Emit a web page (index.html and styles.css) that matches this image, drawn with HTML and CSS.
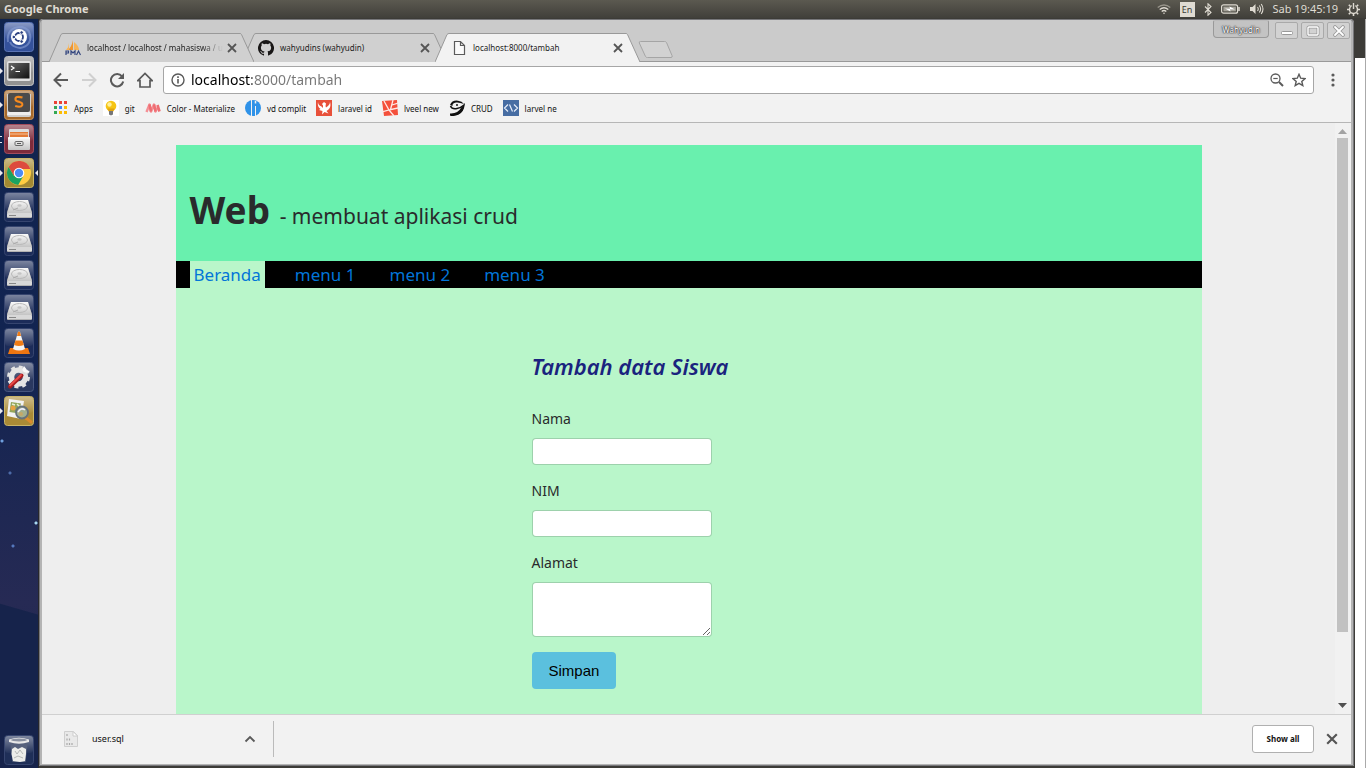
FILE: index.html
```html
<!DOCTYPE html>
<html lang="id">
<head>
<meta charset="utf-8">
<title>localhost:8000/tambah</title>
<link rel="stylesheet" href="styles.css">
</head>
<body>
<svg class="defs" aria-hidden="true">
  <defs>
    <linearGradient id="gloss" x1="0" y1="0" x2="0" y2="1"><stop offset="0" stop-color="#fff" stop-opacity=".42"/><stop offset="1" stop-color="#fff" stop-opacity=".03"/></linearGradient>
    <linearGradient id="silver" x1="0" y1="0" x2="0" y2="1"><stop offset="0" stop-color="#fafafa"/><stop offset="1" stop-color="#c4c4c4"/></linearGradient>
    <linearGradient id="dark" x1="0" y1="0" x2="1" y2="1"><stop offset="0" stop-color="#676767"/><stop offset="1" stop-color="#111"/></linearGradient>
    <symbol id="close" viewBox="0 0 10 10"><path d="M1 1l8 8M9 1l-8 8" stroke="#555" stroke-width="1.8" fill="none"/></symbol>
    <symbol id="disk" viewBox="0 0 30 30">
      <rect x=".5" y=".5" width="29" height="29" rx="3" fill="#1c2c59" stroke="#36456f"/><rect x="1" y="1" width="28" height="17" rx="3" fill="url(#gloss)"/>
      <path d="M7 8h17l4 12v5q0 1-1 1H4q-1 0-1-1v-5z" fill="#8d8d8d"/><path d="M7 8h17l4 13H3z" fill="url(#silver)"/>
      <ellipse cx="15.500" cy="14" rx="8" ry="4.500" fill="none" stroke="#b9b9b9"/><ellipse cx="15.500" cy="13.500" rx="2.200" ry="1.300" fill="#c4c4c4"/><path d="M9 18l5-2" stroke="#aaa"/>
      <rect x="3" y="21" width="25" height="4.500" rx="1" fill="#d8d8d8"/><path d="M5 23.500h7" stroke="#888"/>
    </symbol>
  </defs>
</svg>

<header class="panel">
  <strong class="panel-title">Google Chrome</strong>
  <div class="indicators">
    <svg width="14" height="12" viewBox="0 0 14 12" fill="none" stroke="#dfdbd2" stroke-width="1.300"><path d="M.7 4.500q6.300-5 12.600 0" stroke="#99968c"/><path d="M2.700 6.500q4.300-3.500 8.600 0M4.700 8.500q2.300-2 4.600 0"/><path d="M5.800 9.700h2.400L7 11.200z" fill="#dfdbd2" stroke="none"/></svg>
    <span class="lang">En</span>
    <svg width="8" height="13" viewBox="0 0 8 13" fill="none" stroke="#dfdbd2" stroke-width="1.100"><path d="M1 3.500l6 6-3 2.700V.8l3 2.700-6 6"/></svg>
    <svg width="19" height="10" viewBox="0 0 19 10"><rect x=".6" y=".8" width="16" height="8.400" rx="2" fill="none" stroke="#dfdbd2" stroke-width="1.200"/><path d="M18 3v4" stroke="#dfdbd2" stroke-width="1.500"/><rect x="2.400" y="2.600" width="12.500" height="4.800" fill="#a5a299"/><path d="M4 4.500l5 .2L8.500 2.500 14 5.500l-5-.2.500 2.200z" fill="#fff"/></svg>
    <svg width="15" height="12" viewBox="0 0 15 12"><path d="M1 4h2.500L6.500 1v10L3.500 8H1z" fill="#dfdbd2"/><path d="M8.500 4q1.500 2 0 4M10.300 2.500q2.600 3.500 0 7M12.200 1q3.600 5 0 10" fill="none" stroke="#dfdbd2" stroke-width="1.100"/></svg>
    <time class="clock">Sab 19:45:19</time>
    <svg width="13" height="13" viewBox="0 0 13 13" fill="none" stroke="#dfdbd2"><circle cx="6.500" cy="6.500" r="4" stroke-width="1.500"/><path d="M1.800 1.800l1.500 1.500M11.200 1.800L9.700 3.300M1.800 11.200l1.500-1.500M11.200 11.200L9.700 9.700M0 6.500h2M11 6.500h2M6.500 11v2" stroke-width="1.600"/><path d="M6.500 0v6" stroke="#47463f" stroke-width="3.600"/><path d="M6.500 0v6" stroke-width="1.500"/></svg>
  </div>
</header>

<div class="desktop">
  <nav class="launcher" aria-label="Launcher">
    <button class="app" aria-label="Dash"><svg viewBox="0 0 30 30"><rect x=".5" y=".5" width="29" height="29" rx="3" fill="#34519b" stroke="#5a74b5"/><rect x="1" y="1" width="28" height="16" rx="3" fill="url(#gloss)"/><path d="M4 20Q2 5 18 5q8 2 8 9M26 12q2 12-10 14Q8 25 6 20" fill="none" stroke="#8ba0d6" stroke-width="2" opacity=".6"/><circle cx="15" cy="15" r="8" fill="#fff"/><circle cx="15" cy="15" r="4" fill="none" stroke="#2b4080" stroke-width="1.800"/><g stroke="#fff" stroke-width="1"><circle cx="9.800" cy="15" r="1.800" fill="#2b4080"/><circle cx="17.600" cy="10.500" r="1.800" fill="#2b4080"/><circle cx="17.600" cy="19.500" r="1.800" fill="#2b4080"/></g></svg></button>
    <button class="app open" aria-label="Terminal"><svg viewBox="0 0 30 30"><rect x=".5" y=".5" width="29" height="29" rx="3" fill="#929292" stroke="#c4c4c4"/><rect x="1" y="1" width="28" height="16" rx="3" fill="url(#gloss)"/><rect x="3" y="5" width="24" height="20" rx="2" fill="#e2e2e2"/><rect x="4.500" y="7" width="21" height="15.500" fill="url(#dark)"/><path d="M7 10l3 2-3 2M11.500 15.500H16" fill="none" stroke="#fff" stroke-width="1.200"/></svg></button>
    <button class="app open" aria-label="Sublime Text"><svg viewBox="0 0 30 30"><rect x=".5" y=".5" width="29" height="29" rx="3" fill="#a5692b" stroke="#c6935b"/><rect x="1" y="1" width="28" height="16" rx="3" fill="url(#gloss)"/><path d="M3 4h24v21q0 2-2 2H5q-2 0-2-2z" fill="#cfcfcf"/><rect x="4" y="3" width="22" height="19" rx="2" fill="#4b4b4b"/><path d="M4 22h22l1 3H3z" fill="#eee"/><path d="M18.500 7.500Q11 5.500 11.500 9.500q.3 1.800 4 2.400 3.500.8 2.700 3.300-1.200 2.500-7 .8" fill="none" stroke="#f58a1f" stroke-width="2.100"/></svg></button>
    <button class="app double" aria-label="Files"><svg viewBox="0 0 30 30"><rect x=".5" y=".5" width="29" height="29" rx="3" fill="#7d2b3b" stroke="#a34c5d"/><rect x="1" y="1" width="28" height="16" rx="3" fill="url(#gloss)"/><rect x="5" y="5" width="20" height="10" rx="1" fill="#ddd"/><path d="M6 8h18v5H6z" fill="#e47a35"/><path d="M6 10h18" stroke="#f4c29d"/><rect x="4" y="13" width="22" height="13" rx="1" fill="url(#silver)"/><path d="M4 14h22" stroke="#fff"/><rect x="11" y="17.500" width="8" height="4" rx="1" fill="none" stroke="#666"/><path d="M13 19.500h4" stroke="#555"/></svg></button>
    <button class="app open active" aria-label="Google Chrome"><svg viewBox="0 0 30 30"><rect x=".5" y=".5" width="29" height="29" rx="3" fill="#a38932" stroke="#c9b468"/><rect x="1" y="1" width="28" height="16" rx="3" fill="url(#gloss)"/><circle cx="15" cy="15" r="12" fill="#ffcd42"/><path d="M4.600 9A12 12 0 0 1 26.300 11H15L10 18z" fill="#dd4b3e"/><path d="M4.600 9A12 12 0 0 0 14.200 27L19 18.500 10 18z" fill="#1aa261"/><circle cx="15" cy="15" r="5.300" fill="#fff"/><circle cx="15" cy="15" r="4.200" fill="#4c8bf5"/></svg></button>
    <button class="app" aria-label="Volume 1"><svg><use href="#disk"/></svg></button>
    <button class="app" aria-label="Volume 2"><svg><use href="#disk"/></svg></button>
    <button class="app" aria-label="Volume 3"><svg><use href="#disk"/></svg></button>
    <button class="app" aria-label="Volume 4"><svg><use href="#disk"/></svg></button>
    <button class="app" aria-label="VLC"><svg viewBox="0 0 30 30"><rect x=".5" y=".5" width="29" height="29" rx="3" fill="#1c2c59" stroke="#36456f"/><rect x="1" y="1" width="28" height="17" rx="3" fill="url(#gloss)"/><path d="M6 20h18l2 6H4z" fill="#ee7611"/><path d="M14 4q1-1 2 0l5 17q-6 3-12 0z" fill="#f5f5f5"/><path d="M14 4q1-1 2 0l1 4h-4zM11.500 12.500h7l1.300 4.500q-5 2-9.700 0z" fill="#f07c16"/></svg></button>
    <button class="app" aria-label="System Settings"><svg viewBox="0 0 30 30"><rect x=".5" y=".5" width="29" height="29" rx="3" fill="#2a3860" stroke="#46557d"/><rect x="1" y="1" width="28" height="17" rx="3" fill="url(#gloss)"/><circle cx="14.500" cy="15" r="10" fill="none" stroke="#e4e4e4" stroke-width="3" stroke-dasharray="4 3.850"/><circle cx="14.500" cy="15" r="7" fill="none" stroke="#e4e4e4" stroke-width="5.500"/><path d="M17 14l5-6" stroke="#ddd" stroke-width="3"/><path d="M20 4q-3 4 0 6t6-1l-3-.5-1-2z" fill="#fafafa"/><path d="M6 24.500L17.500 13.500" stroke="#a81c20" stroke-width="4" stroke-linecap="round"/><path d="M6 23.500l11-10.500" stroke="#e94b48" stroke-width="1.800" stroke-linecap="round"/></svg></button>
    <button class="app open" aria-label="Image Viewer"><svg viewBox="0 0 30 30"><rect x=".5" y=".5" width="29" height="29" rx="3" fill="#a98a36" stroke="#c9b468"/><rect x="1" y="1" width="28" height="16" rx="3" fill="url(#gloss)"/><path d="M5 3l15 2-3 18L3 20z" fill="#f2f2f2"/><path d="M7 6l10 1.500-2 10L5.500 16z" fill="#92a55b"/><circle cx="9" cy="12" r="2.500" fill="#e8a243"/><path d="M13 8l3 3M8 8l3 1" stroke="#e9efd4" stroke-width="1.500"/><path d="M22 22l5 4" stroke="#db8b2d" stroke-width="3" stroke-linecap="round"/><circle cx="18" cy="16.500" r="6" fill="#a3b08e" stroke="#66717b" stroke-width="1.800"/><circle cx="17" cy="18" r="2" fill="#c5a866"/><path d="M14 16q3-5 7-2" stroke="#eef" fill="none" stroke-width="1.500"/></svg></button>
    <button class="app trash" aria-label="Trash"><svg viewBox="0 0 30 30"><rect x=".5" y=".5" width="29" height="29" rx="3" fill="#1f2f58" stroke="#36456f"/><rect x="1" y="1" width="28" height="17" rx="3" fill="url(#gloss)"/><path d="M6 6h18l-2.500 21h-13z" fill="#56617c"/><path d="M5 4.500q10-3.500 20 0V7q-10 3.500-20 0z" fill="#e8e8e8"/><ellipse cx="15" cy="5" rx="8" ry="1.500" fill="#8a91a1"/><path d="M8 14l3-2 3 2 4-2 4 2v5l-1 7-5 1-7-1-1.500-7z" fill="#ecedea"/><path d="M11 16l2 3 3-4 3 4M10 23l4-2 5 2" stroke="#b5b8b6" fill="none"/></svg></button>
  </nav>

  <section class="window">
    <div class="titlebar">
      <div class="tabs" role="tablist">
        <div class="tab first">
          <svg class="tab-shape" viewBox="0 0 205 29" preserveAspectRatio="none"><path d="M0 29L12 1.500Q13 .5 14 .5H191q1 0 1.500 1L205 29"/></svg>
          <svg class="favicon" viewBox="0 0 16 16"><path d="M8 0v10H3Q7 6 8 0z" fill="#f0962e"/><path d="M9 2q5 4 5 8H9zM4 3v7H1q3-3 3-7z" fill="#f7b457"/><path d="M1 15v-4h2.500v2H1M6 15v-4l2 2 2-2v4M11.500 15l2-4 2 4" fill="none" stroke="#33457e" stroke-width="1.200"/></svg>
          <button class="tab-name faded" role="tab">localhost / localhost / mahasiswa / u</button>
          <button class="tab-close" aria-label="Close tab"><svg><use href="#close"/></svg></button>
        </div>
        <div class="tab second">
          <svg class="tab-shape" viewBox="0 0 205 29" preserveAspectRatio="none"><path d="M0 29L12 1.500Q13 .5 14 .5H191q1 0 1.500 1L205 29"/></svg>
          <svg class="favicon" viewBox="0 0 16 16"><path d="M8 0a8 8 0 0 0-2.530 15.590c.4.070.55-.170.55-.380v-1.490c-2.230.480-2.700-.950-2.700-.950-.360-.920-.890-1.170-.890-1.170-.730-.500.050-.490.050-.490.810.060 1.230.830 1.230.830.720 1.230 1.880.870 2.340.660.070-.520.280-.870.510-1.070-1.780-.200-3.640-.890-3.640-3.950 0-.870.310-1.590.820-2.150-.080-.200-.360-1.020.080-2.120 0 0 .670-.210 2.200.820a7.600 7.600 0 0 1 4 0c1.530-1.040 2.200-.820 2.200-.820.440 1.100.160 1.920.080 2.120.510.560.820 1.270.820 2.150 0 3.070-1.870 3.750-3.650 3.950.290.250.540.730.540 1.480v2.200c0 .210.150.460.550.380A8 8 0 0 0 8 0z" fill="#191717"/></svg>
          <button class="tab-name" role="tab">wahyudins (wahyudin)</button>
          <button class="tab-close" aria-label="Close tab"><svg><use href="#close"/></svg></button>
        </div>
        <div class="tab current">
          <svg class="tab-shape" viewBox="0 0 205 29" preserveAspectRatio="none"><path d="M0 29L12 1.500Q13 .5 14 .5H191q1 0 1.500 1L205 29"/></svg>
          <svg class="favicon" viewBox="0 0 16 16"><path d="M3.500 1.500h6l4 4v9h-10zM9.500 1.500v4h4" fill="#fafafa" stroke="#5a5a5a" stroke-width="1.200"/></svg>
          <button class="tab-name" role="tab" aria-selected="true">localhost:8000/tambah</button>
          <button class="tab-close" aria-label="Close tab"><svg><use href="#close"/></svg></button>
        </div>
        <button class="new-tab" aria-label="New tab"><svg width="35" height="18" viewBox="0 0 35 18"><path d="M2.500.500h24q1.500 0 2 1l5.500 13q.8 2-1 2H9.500q-1.500 0-2-1L1.300 2Q.8.500 2.500.500z" fill="#d2d2d2" stroke="#a5a5a5"/></svg></button>
      </div>
      <div class="controls">
        <button class="profile">Wahyudin</button>
        <button class="control" aria-label="Minimize"><svg width="14" height="12" viewBox="0 0 14 12"><rect x="1.500" y="6.500" width="11" height="3" rx="1" fill="#fff" stroke="#999"/></svg></button>
        <button class="control" aria-label="Maximize"><svg width="14" height="12" viewBox="0 0 14 12"><rect x="2" y="2" width="10" height="8" rx="1" fill="none" stroke="#999" stroke-width="3"/><rect x="2" y="2" width="10" height="8" rx="1" fill="none" stroke="#fff" stroke-width="1.400"/></svg></button>
        <button class="control" aria-label="Close window"><svg width="14" height="12" viewBox="0 0 14 12"><path d="M3 2l8 8M11 2l-8 8" stroke="#999" stroke-width="3.600" stroke-linecap="round"/><path d="M3 2l8 8M11 2l-8 8" stroke="#fff" stroke-width="1.800" stroke-linecap="round"/></svg></button>
      </div>
    </div>

    <div class="toolbar">
      <button class="tool" aria-label="Back"><svg viewBox="0 0 16 16"><path d="M15 8H2M8 1.500L1.500 8 8 14.500" fill="none" stroke="#5a5a5a" stroke-width="2"/></svg></button>
      <button class="tool" aria-label="Forward" disabled><svg viewBox="0 0 16 16"><path d="M1 8h13M8 1.500L14.500 8 8 14.500" fill="none" stroke="#d0d0d0" stroke-width="2"/></svg></button>
      <button class="tool" aria-label="Reload"><svg viewBox="0 0 16 16"><path d="M13 4.300A6.200 6.200 0 1 0 14.200 9.500" fill="none" stroke="#5a5a5a" stroke-width="2"/><path d="M15 1v6H9z" fill="#5a5a5a"/></svg></button>
      <button class="tool" aria-label="Home"><svg viewBox="0 0 16 16"><path d="M.8 8.700L8 1.500l7.200 7.200H13V15H3V8.700z" fill="none" stroke="#5a5a5a" stroke-width="1.700"/></svg></button>
      <div class="omnibox">
        <svg width="14" height="14" viewBox="0 0 14 14"><circle cx="7" cy="7" r="6" fill="none" stroke="#5a5a5a" stroke-width="1.400"/><path d="M7 6v4.500M7 3.300v1.600" stroke="#5a5a5a" stroke-width="1.600"/></svg>
        <input class="address" type="text" aria-label="Address" value="localhost:8000/tambah">
        <button class="mini" aria-label="Zoom"><svg width="14" height="14" viewBox="0 0 14 14" fill="none" stroke="#5a5a5a"><circle cx="5.500" cy="5.500" r="4.500" stroke-width="1.300"/><path d="M3.300 5.500h4.400" stroke-width="1.200"/><path d="M9 9l4 4" stroke-width="2"/></svg></button>
        <button class="mini" aria-label="Bookmark"><svg width="14" height="14" viewBox="0 0 14 14"><path d="M7 1.300l1.700 3.900 4.300.4-3.200 2.800 1 4.200L7 10.400l-3.800 2.200 1-4.200L1 5.600l4.300-.4z" fill="none" stroke="#5a5a5a" stroke-width="1.400"/></svg></button>
      </div>
      <button class="mini" aria-label="Menu"><svg width="6" height="14" viewBox="0 0 6 14" fill="#5a5a5a"><circle cx="3" cy="2" r="1.600"/><circle cx="3" cy="7" r="1.600"/><circle cx="3" cy="12" r="1.600"/></svg></button>
    </div>

    <nav class="bookmarks" aria-label="Bookmarks">
      <a href="#apps"><svg viewBox="0 0 16 16"><path d="M2 1h3v3H2zM7 1h3v3H7zM12 1h3v3h-3z" fill="#ea4335"/><path d="M2 6h3v3H2z" fill="#34a853"/><path d="M7 6h3v3H7z" fill="#4285f4"/><path d="M12 6h3v3h-3zM7 11h3v3H7zM12 11h3v3h-3z" fill="#fbbc05"/><path d="M2 11h3v3H2z" fill="#34a853"/></svg>Apps</a>
      <a href="#git"><svg viewBox="0 0 16 16"><path fill="#fff" d="M0 0h16v16H0z"/><circle cx="8" cy="6" r="5.300" fill="#f6c514"/><path d="M4.500 8.500h7L10 12H6z" fill="#e2a512"/><circle cx="6.500" cy="4.500" r="2.200" fill="#fff09a"/><path d="M6 11h4v3.500l-2 1-2-1z" fill="#777"/></svg>git</a>
      <a href="#color"><svg viewBox="0 0 16 16"><path d="M1.500 12l3-7.500 1.500 7 3-7 1.500 7L13 7" fill="none" stroke="#f58f95" stroke-width="2.400" stroke-linejoin="round"/><path d="M4.500 4.500l1.500 7M9 4.500l1.500 7M12.500 5l2 6.500" stroke="#ee6e73" stroke-width="2.600"/></svg>Color - Materialize</a>
      <a href="#complit"><svg viewBox="0 0 16 16"><circle cx="8" cy="8" r="8" fill="#2f92e8"/><path d="M6.500 0v16M10.500 6v10" stroke="#f2f2f2" stroke-width="1"/><path d="M10.500 1v2.500" stroke="#f2f2f2" stroke-width="1.500"/></svg>vd complit</a>
      <a href="#laravel"><svg viewBox="0 0 16 16"><path fill="#e8503a" d="M0 0h16v16H0z"/><path d="M2 2q0 3 3.500 4.500L7 8V5.500L6 4l2-2 2 1.500L9.500 6l.5 1.500L12 6q2-1.500 2-4 1.500 5-1.500 7.500l-2 1.500 2 2.500L8.500 12 6 14.500l.5-3.500L3 10l1.500-1Q1 6.500 2 2z" fill="#fff"/></svg>laravel id</a>
      <a href="#new"><svg viewBox="0 0 16 16"><path fill="#f4503b" d="M0 1l15-1 1 15-14 1z"/><path d="M2 1l5 9 9-2M0 12l7-2 5 6M11 0L8.500 9.500M10 5l6-2" fill="none" stroke="#ffe9e5" stroke-width="1.300"/></svg>lveel new</a>
      <a href="#crud"><svg viewBox="0 0 16 16"><path d="M1 5Q3 0 9 .7q4 .3 6 3.300-5-2-8-1.500Q3 3 3.500 6z" fill="#111"/><path d="M1.500 6Q3 9.500 8 8.500q4-.8 7-3.500-1 7-6 9-4 1.500-7.500 1.500" fill="none" stroke="#111" stroke-width="1.500"/><path d="M1 13.500Q9 14 12.500 7L15 5.500Q14.500 16 1 15.500z" fill="#111"/><circle cx="8" cy="5" r=".9"/></svg>CRUD</a>
      <a href="#larvel"><svg viewBox="0 0 16 16"><path fill="#476da3" d="M0 0h16v16H0z"/><path d="M5 4.500L1.500 8 5 11.500M11 4.500L14.500 8 11 11.500M6.500 4.500l3 7" fill="none" stroke="#e6eefb" stroke-width="1.200"/></svg>larvel ne</a>
    </nav>

    <div class="viewport">
      <div class="scroller">
        <div class="site">
          <header class="site-header"><h1>Web <small>- membuat aplikasi crud</small></h1></header>
          <nav class="menu">
            <a class="selected" href="#beranda">Beranda</a>
            <a href="#menu1">menu 1</a>
            <a href="#menu2">menu 2</a>
            <a href="#menu3">menu 3</a>
          </nav>
          <main class="content">
            <form class="form">
              <h2>Tambah data Siswa</h2>
              <div class="field"><label for="nama">Nama</label><input id="nama" type="text"></div>
              <div class="field"><label for="nim">NIM</label><input id="nim" type="text"></div>
              <div class="field"><label for="alamat">Alamat</label><textarea id="alamat"></textarea></div>
              <button class="save" type="button">Simpan</button>
            </form>
          </main>
        </div>
      </div>
      <div class="scrollbar" aria-hidden="true">
        <svg width="9" height="5" viewBox="0 0 9 5"><path d="M0 5l4.500-5L9 5z" fill="#a3a3a3"/></svg>
        <span class="track"><span class="thumb"></span></span>
        <svg width="9" height="5" viewBox="0 0 9 5"><path d="M0 0l4.500 5L9 0z" fill="#505050"/></svg>
      </div>
    </div>

    <footer class="downloads">
      <div class="download">
        <svg width="14" height="16" viewBox="0 0 14 16"><path d="M.5.5h9l4 4v11H.5z" fill="#e9e9e9" stroke="#cfcfcf"/><path d="M9 .5V5h4.500z" fill="#fff" stroke="#ccc"/><path d="M3 3v2M3 7.500v2M5.500 7.500v2M3 12v2M5.500 12v2M8 12v2" stroke="#aaa" stroke-width="1.200"/></svg>
        <a class="file" href="#user.sql">user.sql</a>
        <button class="mini" aria-label="Options"><svg width="12" height="8" viewBox="0 0 12 8"><path d="M1.500 6.500L6 2l4.500 4.500" fill="none" stroke="#5a5a5a" stroke-width="1.800"/></svg></button>
      </div>
      <button class="show-all">Show all</button>
      <button class="mini" aria-label="Close downloads"><svg width="12" height="12"><use href="#close"/></svg></button>
    </footer>
  </section>
  <div class="behind"></div>
</div>
</body>
</html>
```
FILE: styles.css
```css
* {
  box-sizing: border-box;
}

body {
  margin: 0;
  height: 100vh;
  display: flex;
  flex-direction: column;
  overflow: hidden;
  background: #3c3b37;
  font-family: "Noto Sans", "Open Sans", sans-serif;
  color: #292b2c;
}

button {
  margin: 0;
  padding: 0;
  border: 0;
  background: none;
  font: inherit;
  color: inherit;
}

a {
  text-decoration: none;
}

svg {
  display: block;
  flex: none;
}

.defs {
  position: absolute;
  width: 0;
  height: 0;
}

/* Desktop panel */
.panel {
  flex: none;
  height: 18px;
  padding: 0 6px 0 4px;
  display: flex;
  align-items: center;
  justify-content: space-between;
  background: linear-gradient(#5b5950, #403f3a);
  color: #dfdbd2;
  font-size: 11px;
  line-height: 18px;
}

.indicators {
  display: flex;
  align-items: center;
  gap: 9px;
}

.lang {
  width: 15px;
  height: 15px;
  background: #dfdbd2;
  color: #3c3b37;
  font-size: 9px;
  line-height: 15px;
  text-align: center;
}

.desktop {
  flex: 1;
  min-height: 0;
  display: flex;
  padding-top: 1px;
}

/* Launcher */
.launcher {
  flex: none;
  width: 39px;
  padding: 3px 5px 3px 4px;
  display: flex;
  flex-direction: column;
  gap: 4px;
  border-right: 1px solid #27272d;
  background:
    radial-gradient(circle at 2px 422px, #6f9fdd 1px, transparent 2px),
    radial-gradient(circle at 10px 454px, #4d6ba8 1px, transparent 2px),
    radial-gradient(circle at 36px 504px, #a8d8f0 1px, transparent 2px),
    radial-gradient(circle at 13px 527px, #5578bd 1px, transparent 2px),
    linear-gradient(196deg, transparent 572px, #16234b 573px),
    linear-gradient(#10244e, #122451 45%, #262a54 78%, #192349);
}

.app {
  position: relative;
  width: 30px;
  height: 30px;
}

.app svg {
  width: 30px;
  height: 30px;
}

.open::before,
.active::after,
.double::before {
  content: "";
  position: absolute;
  top: 12px;
  left: -4px;
  border: 3px solid transparent;
  border-left-color: #e8e8ee;
  border-right-width: 0;
}

.active::after {
  left: auto;
  right: -4px;
  border-left-width: 0;
  border-right: 3px solid #e8e8ee;
}

.double::before {
  height: 5px;
  width: 2px;
  border: solid #e8e8ee;
  border-width: 1px 0;
}

.trash {
  margin-top: auto;
}

/* Browser window */
.window {
  flex: 1;
  min-width: 0;
  display: flex;
  flex-direction: column;
  margin-bottom: 2px;
  border: solid #b4b4b4;
  border-width: 0 3px 2px;
  border-radius: 4px 4px 0 0;
  outline: 1px solid #77777a;
  outline-offset: -1px;
  background: #f2f2f2;
}

.behind {
  flex: none;
  width: 12px;
  border: solid #3c3b37;
  border-width: 0 0 0 1px;
  background: linear-gradient(#3c3b37 39px, #fff 39px);
  box-shadow: inset -1px 0 #aaa;
}

.titlebar {
  flex: none;
  height: 43px;
  display: flex;
  align-items: flex-end;
  justify-content: space-between;
  padding: 0 1px 0 7px;
  border-radius: 3px 3px 0 0;
  background: linear-gradient(#999, #999) bottom / 100% 1px no-repeat #cbcbcb;
}

.tabs {
  display: flex;
  align-items: flex-end;
}

.tab {
  position: relative;
  width: 205px;
  height: 29px;
  margin-right: -12px;
  padding: 0 17px 0 16px;
  display: flex;
  align-items: center;
  font-size: 8px;
  color: #1c1c1c;
}

.first {
  z-index: 2;
}

.second {
  z-index: 1;
}

.current {
  z-index: 3;
}

.tab-shape {
  position: absolute;
  inset: 0;
  width: 100%;
  height: 100%;
  z-index: -1;
  fill: #d0d0d0;
  stroke: #999;
}

.current .tab-shape {
  fill: #f2f2f2;
}

.favicon {
  width: 16px;
  height: 16px;
}

.tab-name {
  flex: 1;
  min-width: 0;
  margin: 0 4px 0 6px;
  white-space: nowrap;
  text-align: left;
}

.faded {
  mask-image: linear-gradient(90deg, #000 85%, transparent);
}

.tab-close svg {
  width: 10px;
  height: 10px;
}

.new-tab {
  margin: 0 0 3px 10px;
}

.controls {
  align-self: flex-start;
  display: flex;
  gap: 3px;
}

.profile {
  height: 18px;
  margin: 1px 3px 0 0;
  padding: 0 8px;
  border: 1px solid #999;
  border-top-color: #bbb;
  border-radius: 2px 2px 4px 4px;
  background: #c3c3c3;
  font-size: 8px;
  color: #fff;
  text-shadow: 0 0 1px #333, 0 0 1px #333, 0 0 2px #333;
}

.control {
  width: 23px;
  height: 17px;
  margin-top: 3px;
  display: grid;
  place-items: center;
  border: 1px solid #a9a9a9;
  border-radius: 2px;
  background: #d2d2d2;
}

.toolbar {
  flex: none;
  height: 36px;
  padding: 0 15px 0 11px;
  display: flex;
  align-items: center;
  gap: 12px;
}

.tool svg {
  width: 16px;
  height: 16px;
}

.omnibox {
  flex: 1;
  min-width: 0;
  height: 28px;
  margin: 0 4px 0 -2px;
  padding: 0 7px;
  display: flex;
  align-items: center;
  gap: 8px;
  border: 1px solid #a6a6a6;
  border-radius: 3px;
  background: #fff;
}

.address {
  flex: 1;
  min-width: 0;
  margin-left: -2px;
  padding: 0;
  border: 0;
  outline: 0;
  font: 14px/20px "Noto Sans", "Open Sans", sans-serif;
  color: transparent;
  background: linear-gradient(90deg, #000 61px, #777 61px);
  background-clip: text;
}

.bookmarks {
  flex: none;
  height: 25px;
  padding: 0 10px 4px;
  display: flex;
  align-items: center;
  gap: 10px;
  border-bottom: 1px solid #b6b6b6;
  font-size: 8px;
}

.bookmarks a {
  display: flex;
  align-items: center;
  gap: 6px;
  white-space: nowrap;
  color: #111;
}

.bookmarks svg {
  width: 16px;
  height: 16px;
}

/* Page */
.viewport {
  flex: 1;
  min-height: 0;
  display: flex;
  background: #eee;
}

.scroller {
  flex: 1;
  min-width: 0;
  padding: 22px 20px 0;
  overflow: hidden;
}

.site {
  max-width: 1026px;
  height: 100%;
  margin: 0 auto;
  display: flex;
  flex-direction: column;
}

.site-header {
  flex: none;
  height: 116px;
  padding: 38px 14px 0;
  background: #69f0ae;
}

h1 {
  margin: 0;
  font-size: 37px;
  line-height: 54px;
}

h1 small {
  font-size: 21px;
  font-weight: 400;
}

.menu {
  flex: none;
  display: flex;
  gap: 26px;
  padding-left: 14px;
  background: #000;
  font-size: 17px;
  line-height: 27px;
}

.menu a {
  padding: 0 4px;
  color: #0275d8;
}

.menu .selected {
  background: #b9f6ca;
}

.content {
  flex: 1;
  min-height: 0;
  padding: 65px 20px 0 356px;
  background: #b9f6ca;
}

.form h2 {
  margin: 0 0 29px;
  color: #1a237e;
  font-size: 22px;
  font-style: italic;
  font-weight: 600;
  line-height: 26px;
}

.field {
  margin-bottom: 15px;
  display: flex;
  flex-direction: column;
  align-items: flex-start;
  gap: 8px;
}

.field label {
  font-size: 14px;
  line-height: 22px;
}

.field input,
.field textarea {
  width: 180px;
  height: 27px;
  padding: 2px 6px;
  border: 1px solid rgba(0, 0, 0, 0.15);
  border-radius: 4px;
  background: #fff;
  background-clip: padding-box;
  font: inherit;
}

.field textarea {
  height: 55px;
}

.save {
  padding: 0 17px;
  border-radius: 4px;
  background: #5bc0de;
  color: #000;
  font: 15px/37px "Liberation Sans", Arial, sans-serif;
}

.scrollbar {
  flex: none;
  width: 16px;
  padding: 6px 3px 6px 2px;
  display: flex;
  flex-direction: column;
  align-items: center;
  gap: 4px;
  background: #f1f1f1;
}

.track {
  flex: 1;
  align-self: stretch;
}

.thumb {
  display: block;
  height: 88%;
  background: #c1c1c1;
}

/* Downloads */
.downloads {
  flex: none;
  height: 50px;
  padding: 0 13px 2px 22px;
  display: flex;
  align-items: center;
  border-top: 1px solid #d0d0d0;
  font-size: 9px;
}

.download {
  width: 210px;
  height: 36px;
  margin-right: auto;
  padding-right: 17px;
  display: flex;
  align-items: center;
  gap: 14px;
  border-right: 1px solid #bbb;
}

.file {
  flex: 1;
  color: #111;
}

.show-all {
  width: 62px;
  height: 28px;
  margin-right: 12px;
  border: 1px solid #b0b0b0;
  border-radius: 3px;
  background: #fff;
  color: #111;
  font-size: 8px;
  font-weight: 700;
}
```
